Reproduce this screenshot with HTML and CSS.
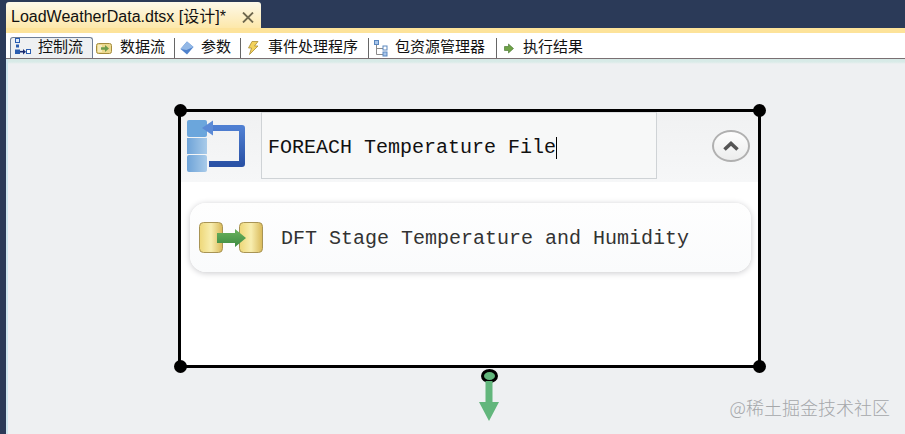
FILE: index.html
```html
<!DOCTYPE html>
<html lang="zh">
<head>
<meta charset="utf-8">
<title>LoadWeatherData.dtsx</title>
<link rel="stylesheet" href="styles.css">
</head>
<body>
<div class="titlebar">
  <div class="tab"><span class="tab-name">LoadWeatherData.dtsx [设计]*</span>
    <svg class="tab-close" width="12" height="11" viewBox="0 0 12 11"><path d="M1 0.500L11 10.500M11 0.500L1 10.500" stroke="#6f684e" stroke-width="1.800"/></svg>
  </div>
</div>
<div class="gold"></div>
<div class="frame">
  <nav class="toolbar">
    <div class="tool active">
      <svg class="ico" width="17" height="17" viewBox="0 0 17 17"><rect x="1.500" y="0.500" width="4" height="4" fill="#dfeaf8" stroke="#2a5db0"/><rect x="2" y="6.500" width="3" height="3" fill="#2a5db0"/><rect x="1" y="11.500" width="5" height="4.500" fill="#2a5db0"/><path d="M6 13.700h4" stroke="#1a2c70" stroke-width="1.600"/><path d="M9 11l3 2.700-3 2.700z" fill="#1a2c70"/><rect x="12.500" y="11.500" width="4" height="4" fill="#fff" stroke="#2a5db0"/></svg>
      <span>控制流</span>
    </div>
    <div class="tool flow">
      <svg class="ico" width="16" height="11" viewBox="0 0 16 11"><rect x="0.500" y="0.500" width="15" height="10" rx="2" fill="#ecd98f" stroke="#a58c3e"/><rect x="2" y="2" width="4" height="7" fill="#f6ecc0"/><path d="M5 4.200h4V2l4 3.500L9 9V6.800H5z" fill="#6d9c4c"/></svg>
      <span>数据流</span>
    </div>
    <div class="tool params">
      <svg class="ico" width="14" height="14" viewBox="0 0 14 14"><path d="M7 0.500l6.500 5.500-6.500 7.500L0.500 8z" fill="#4f82cc"/><path d="M7 0.500l6.500 5.500L6.500 9 0.500 8z" fill="#93b8e6"/></svg>
      <span>参数</span>
    </div>
    <div class="tool events">
      <svg class="ico" width="12" height="14" viewBox="0 0 12 14"><path d="M5 0.500h6L7.500 5H11L2.500 13.500 4.500 7H1.500z" fill="#f3d25c" stroke="#a98d35" stroke-width="0.800"/></svg>
      <span>事件处理程序</span>
    </div>
    <div class="tool explorer">
      <svg class="ico" width="14" height="17" viewBox="0 0 14 17"><path d="M2.500 4v10.500H9M2.500 8.500H9" fill="none" stroke="#8a8a8a"/><rect x="0.500" y="0.500" width="4" height="4" fill="#a9c6ea" stroke="#5a87bf"/><rect x="9" y="6" width="4" height="4" fill="#fff" stroke="#5a87bf"/><rect x="9" y="12" width="4" height="4" fill="#a9c6ea" stroke="#5a87bf"/></svg>
      <span>包资源管理器</span>
    </div>
    <div class="tool results">
      <svg class="ico" width="10" height="11" viewBox="0 0 10 11"><path d="M0.500 3.500h4V1l5 4.500-5 4.500V7.500h-4z" fill="#6ea246" stroke="#3f6f29" stroke-width="0.600"/></svg>
      <span>执行结果</span>
    </div>
  </nav>
  <main class="canvas">
    <section class="container">
      <header class="container-head">
        <svg class="loop" width="58" height="52" viewBox="0 0 58 52">
          <defs>
            <linearGradient id="stack" x1="0" x2="1" y1="0" y2="0"><stop offset="0" stop-color="#6ea3d8"/><stop offset="1" stop-color="#a9cbe9"/></linearGradient>
            <linearGradient id="loopline" x1="0" x2="0" y1="0" y2="1"><stop offset="0" stop-color="#4f7fd2"/><stop offset="1" stop-color="#2a52a6"/></linearGradient>
          </defs>
          <rect x="0" y="0" width="20" height="17" rx="2" fill="#6ba6dc"/>
          <rect x="0" y="18" width="20" height="16" fill="url(#stack)"/>
          <rect x="0" y="35" width="20" height="17" rx="2" fill="url(#stack)"/>
          <path d="M22 44H55V8H22" fill="none" stroke="url(#loopline)" stroke-width="6" stroke-linejoin="round"/>
          <path d="M15 8L26 0.500V15.500z" fill="#5b8ad6"/>
        </svg>
        <div class="name-field"><span class="name-text">FOREACH Temperature File</span><span class="caret"></span></div>
        <button class="collapse" type="button" aria-label="折叠">
          <svg width="16" height="10" viewBox="0 0 16 10"><path d="M1.500 8.500L8 2.500l6.500 6" fill="none" stroke="#555" stroke-width="3.600"/></svg>
        </button>
      </header>
      <div class="container-body">
        <div class="task">
          <svg class="task-ico" width="64" height="31" viewBox="0 0 64 31">
            <defs>
              <linearGradient id="db" x1="0" x2="1" y1="0" y2="0"><stop offset="0" stop-color="#eed778"/><stop offset="0.500" stop-color="#f8eeb0"/><stop offset="1" stop-color="#d9b958"/></linearGradient>
              <linearGradient id="go" x1="0" x2="0" y1="0" y2="1"><stop offset="0" stop-color="#6cb35f"/><stop offset="1" stop-color="#3c8a41"/></linearGradient>
            </defs>
            <rect x="0.500" y="0.500" width="23" height="30" rx="4" fill="url(#db)" stroke="#a89455"/>
            <rect x="40.500" y="0.500" width="23" height="30" rx="4" fill="url(#db)" stroke="#a89455"/>
            <path d="M18 11H36V7L47 16 36 25V21H18z" fill="url(#go)"/>
          </svg>
          <span class="task-name">DFT Stage Temperature and Humidity</span>
        </div>
      </div>
      <span class="handle tl"></span><span class="handle tr"></span><span class="handle bl"></span><span class="handle br"></span>
      <div class="connector">
        <span class="port"></span>
        <svg width="20" height="40" viewBox="0 0 20 40"><path d="M6.500 0h7v21H20L10 40 0 21h6.500z" fill="#62b67c"/></svg>
      </div>
    </section>
    <div class="watermark">@稀土掘金技术社区</div>
  </main>
</div>
</body>
</html>
```
FILE: styles.css
```css
* { box-sizing: border-box; }
html, body { margin: 0; height: 100%; }
body {
  width: 905px;
  height: 434px;
  overflow: hidden;
  background: #2b3a58;
  font-family: "Liberation Sans", "Noto Sans CJK SC", sans-serif;
  display: flex;
  flex-direction: column;
}
.titlebar {
  height: 28px;
  padding: 2px 0 0 6px;
  flex: none;
  display: flex;
}
.tab {
  width: 255px;
  height: 26px;
  background: linear-gradient(#fdf9ea, #fde8aa);
  border-radius: 3px 3px 0 0;
  display: flex;
  align-items: center;
  padding: 0 7px 0 5px;
  justify-content: space-between;
}
.tab-name { font-size: 16px; color: #111; white-space: nowrap; }
.tab-close { flex: none; margin-top: 4px; }
.gold { height: 5px; margin-left: 6px; background: #fde39a; flex: none; }
.frame {
  flex: 1;
  margin-left: 6px;
  display: flex;
  flex-direction: column;
  min-height: 0;
}
.toolbar {
  height: 26px;
  flex: none;
  background: #fff;
  border-bottom: 1px solid #7a6f72;
  display: flex;
  align-items: flex-end;
  padding: 0 0 0 4px;
  font-size: 15px;
  color: #111;
}
.tool {
  height: 20px;
  display: flex;
  align-items: center;
  white-space: nowrap;
  flex: none;
}
.tool span { font-family: "Noto Sans CJK SC", sans-serif; line-height: 18px; margin-bottom: 4px; }
.active {
  width: 83px;
  height: 21px;
  border: 1px solid #6f7e95;
  border-bottom: 0;
  border-radius: 3px 3px 0 0;
  background: #eef0f2;
  padding-left: 3px;
  gap: 7px;
}
.active .ico { margin-bottom: 3px; }
.flow { width: 81px; padding-left: 3px; gap: 8px; }
.params, .events, .explorer, .results { border-left: 1px solid #666; }
.params { width: 66px; padding-left: 5px; gap: 7px; }
.events { width: 128px; padding-left: 6px; gap: 9px; }
.explorer { width: 128px; padding-left: 5px; gap: 7px; }
.results { padding-left: 7px; gap: 9px; }
.canvas {
  flex: 1;
  position: relative;
  background: linear-gradient(#d5e9e6, #d9ebe8 3px, #eef0f2 5px);
  border-left: 2px solid #cfe6ef;
  padding: 50px 0 0 170px;
}
.container {
  width: 583px;
  height: 259px;
  border: 3px solid #000;
  background: #fff;
  position: relative;
}
.container-head {
  height: 70px;
  background: linear-gradient(#f0f1f2, #f6f7f8);
  display: flex;
  align-items: flex-start;
  padding: 0 0 0 6px;
}
.loop { margin-top: 8px; flex: none; }
.name-field {
  width: 396px;
  height: 67px;
  margin-left: 16px;
  background: #f7f8f8;
  border: 1px solid #cfd3d6;
  border-top-color: #dfe1e3;
  display: flex;
  align-items: center;
  padding: 4px 0 0 6px;
  font-family: "Liberation Mono", monospace;
  font-size: 20px;
  color: #111;
  white-space: nowrap;
}
.caret { width: 1px; height: 22px; background: #000; }
.collapse {
  width: 38px;
  height: 32px;
  margin: 18px 0 0 55px;
  padding: 0;
  border: 2px solid #b0b0b0;
  border-radius: 50%;
  background: linear-gradient(#fdfdfd, #eceded);
  display: flex;
  align-items: center;
  justify-content: center;
}
.container-body { padding: 21px 7px 0 9px; }
.task {
  height: 69px;
  border-radius: 16px;
  background: linear-gradient(#fefefe, #fafbfc);
  box-shadow: 0 1px 6px #c9c9cc;
  display: flex;
  align-items: center;
  padding-left: 9px;
}
.task-ico { flex: none; }
.task-name {
  margin: 2px 0 0 18px;
  font-family: "Liberation Mono", monospace;
  font-size: 20px;
  color: #333;
  white-space: nowrap;
}
.handle { position: absolute; width: 13px; height: 13px; border-radius: 50%; background: #000; }
.tl { left: -7px; top: -8px; }
.tr { right: -8px; top: -8px; }
.bl { left: -7px; bottom: -8px; }
.br { right: -8px; bottom: -8px; }
.connector {
  position: absolute;
  left: 298px;
  top: 257px;
  width: 20px;
  display: flex;
  flex-direction: column;
  align-items: center;
}
.port {
  width: 17px;
  height: 14px;
  border: 3px solid #000;
  border-radius: 50%;
  background: #62b67c;
  flex: none;
}
.connector svg { margin-top: -2px; flex: none; }
.watermark {
  position: absolute;
  right: 15px;
  bottom: 14px;
  font-family: "Noto Sans CJK SC", sans-serif;
  font-size: 18px;
  font-weight: 300;
  color: #a5a7aa;
  white-space: nowrap;
}
```
